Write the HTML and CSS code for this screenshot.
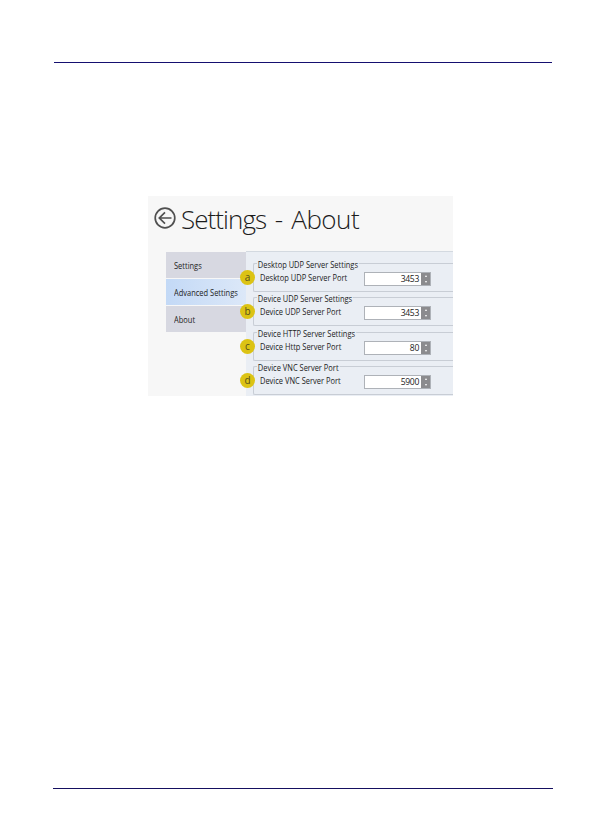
FILE: index.html
```html
<!DOCTYPE html>
<html lang="en">
<head>
    <meta charset="UTF-8">
    <title>Settings - About</title>
    <link rel="stylesheet" href="styles.css">
</head>
<body>
<div class="page">
    <div class="shot">
        <div class="title">
            <svg class="back" viewBox="0 0 22 22" width="22" height="22">
                <circle cx="11" cy="11" r="9.8"/>
                <path d="M17.5 11H5.5M11 5.3L5.3 11L11 16.7"/>
            </svg>
            <h1><span>Settings</span> - About</h1>
        </div>
        <div class="main">
            <ul class="tabs">
                <li><span>Settings</span></li>
                <li class="on"><span>Advanced Settings</span></li>
                <li><span>About</span></li>
            </ul>
            <div class="panel">
                <div class="group">
                    <div class="legend"><span>Desktop UDP Server Settings</span></div>
                    <div class="row">
                        <label>Desktop UDP Server Port</label>
                        <div class="num"><b>3453</b><i></i></div>
                    </div>
                    <em class="badge">a</em>
                </div>
                <div class="group">
                    <div class="legend"><span>Device UDP Server Settings</span></div>
                    <div class="row">
                        <label>Device UDP Server Port</label>
                        <div class="num"><b>3453</b><i></i></div>
                    </div>
                    <em class="badge">b</em>
                </div>
                <div class="group">
                    <div class="legend"><span>Device HTTP Server Settings</span></div>
                    <div class="row">
                        <label>Device Http Server Port</label>
                        <div class="num"><b>80</b><i></i></div>
                    </div>
                    <em class="badge">c</em>
                </div>
                <div class="group">
                    <div class="legend"><span>Device VNC Server Port</span></div>
                    <div class="row">
                        <label>Device VNC Server Port</label>
                        <div class="num"><b>5900</b><i></i></div>
                    </div>
                    <em class="badge">d</em>
                </div>
            </div>
        </div>
    </div>
</div>
</body>
</html>
```

FILE: styles.css
```css
*{
    margin:0;
    padding:0;
    box-sizing: border-box;
    list-style: none;
}
body{
    background: #fff;
    font-family: "Open Sans","Noto Sans",sans-serif;
}
.page{
    width: 500px;
    height: 727px;
    margin: 62px 0 0 53px;
    padding: 134px 0 0 95px;
    border-bottom: 1px solid #150f60;
    background: linear-gradient(#150f70,#150f70) 1px 0/498px 1px no-repeat;
}
.shot{
    width: 305px;
    height: 200px;
    background: #f7f7f7;
    overflow: hidden;
}
.title{
    display: flex;
    height: 55px;
    padding: 11px 0 0 6px;
}
.back{
    flex: none;
    fill: none;
    stroke: #505050;
    stroke-width: 1.7;
}
.title h1{
    margin: -6px 0 0 5px;
    font-size: 26px;
    line-height: 36px;
    font-weight: 300;
    letter-spacing: -.5px;
    word-spacing: 2.4px;
    white-space: nowrap;
    color: #1c1c1c;
}
.title h1 span{
    letter-spacing: -.95px;
}
.main{
    display: flex;
    height: 145px;
    padding-left: 18px;
}
.tabs{
    display: flex;
    flex-direction: column;
    gap: 1px;
    width: 80px;
    padding-top: 1px;
}
.tabs li{
    height: 26px;
    padding-left: 8px;
    font-size: 8.6px;
    line-height: 28px;
    white-space: nowrap;
    color: #222;
    background: #d7d8e1;
}
.tabs span,
.legend span,
.row label{
    display: inline-block;
    transform: scaleX(.87);
    transform-origin: 0 50%;
}
.tabs .on{
    background: linear-gradient(90deg,#c3d9f6,#dce8f8);
}
.panel{
    flex: 1;
    padding: 7px 0 0 7px;
    border-top: 1px solid #d3d9e0;
    background: #eaeef4;
}
.group{
    position: relative;
    height: 34.4px;
}
.group:before{
    content: "";
    display: block;
    height: 27px;
    margin-bottom: -27px;
    border: 1px solid #c8cdd5;
    border-right: 0;
    border-radius: 2px 0 0 2px;
    transform: translateY(4px);
}
.legend{
    position: relative;
    height: 10px;
    padding-left: 4px;
    font-size: 8.6px;
    line-height: 8px;
    white-space: nowrap;
    color: #222;
}
.legend span{
    padding: 0 1px;
    background: #eaeef4;
}
.row{
    position: relative;
    display: flex;
    justify-content: space-between;
    align-items: center;
    height: 14px;
    margin-top: 1px;
    padding: 0 22px 0 7px;
    font-size: 8.6px;
    line-height: 11px;
    white-space: nowrap;
    color: #222;
}
.row label{
    margin-top: -1px;
}
.num{
    display: flex;
    flex: none;
    justify-content: flex-end;
    width: 67px;
    height: 14px;
    margin-left: -40px;
    border: 1px solid #aeb2b8;
    background: #fff;
}
.num b{
    margin-right: 2px;
    font-weight: normal;
    line-height: 13px;
    letter-spacing: -.35px;
}
.num i{
    display: flex;
    flex-direction: column;
    justify-content: space-between;
    align-items: center;
    width: 9px;
    height: 12px;
    padding: 2px 0;
    background: #8b8b8e;
}
.num i:before,
.num i:after{
    content: "";
    border: 1.5px solid transparent;
}
.num i:before{
    border-top: 0;
    border-bottom: 2px solid #fff;
}
.num i:after{
    border-bottom: 0;
    border-top: 2px solid #fff;
}
/* badge sits over the edge between tabs and group */
.badge{
    position: absolute;
    left: -13px;
    top: 11px;
    width: 15px;
    height: 15px;
    border-radius: 50%;
    background: #dcc314;
    font-size: 10px;
    font-style: normal;
    line-height: 14px;
    text-align: center;
    color: #55501c;
}
```
